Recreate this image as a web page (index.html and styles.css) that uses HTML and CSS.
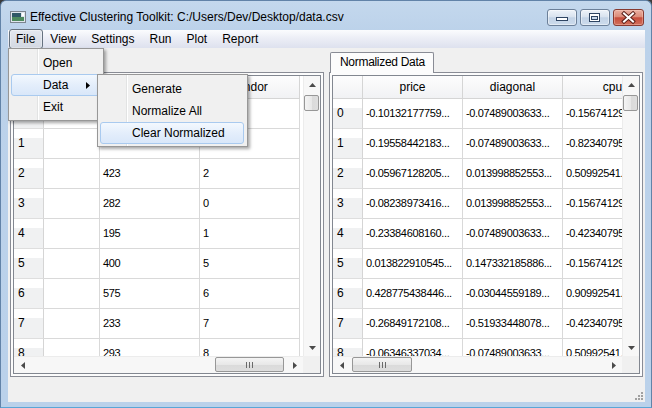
FILE: index.html
```html
<!DOCTYPE html>
<html lang="en">
<head>
<meta charset="utf-8">
<title>Effective Clustering Toolkit</title>
<link rel="stylesheet" href="styles.css">
</head>
<body>
<div class="window">
  <header class="titlebar">
    <svg class="app-icon" width="16" height="12" viewBox="0 0 16 12">
      <rect x="0.5" y="0.5" width="15" height="11" fill="#dfe6ec" stroke="#7b848e"/>
      <rect x="2" y="2" width="9" height="8" fill="#2f5866"/>
      <rect x="2" y="6" width="12" height="4" fill="#4d8a5e"/>
      <rect x="12" y="2" width="2" height="3" fill="#ffffff"/>
    </svg>
    <span class="title">Effective Clustering Toolkit: C:/Users/Dev/Desktop/data.csv</span>
    <div class="caption-buttons">
      <div class="cbtn">
        <svg viewBox="0 0 28 15" width="28" height="15"><rect x="8.5" y="7.5" width="11" height="3" fill="#fff" stroke="#2f4563"/></svg>
      </div>
      <div class="cbtn">
        <svg viewBox="0 0 28 15" width="28" height="15"><rect x="8.5" y="3.5" width="10" height="8" fill="#fff" stroke="#2f4563"/><rect x="10.5" y="6.5" width="6" height="3" fill="#c9d9ec" stroke="#2f4563"/></svg>
      </div>
      <div class="cbtn close">
        <svg viewBox="0 0 29 15" width="29" height="15"><path d="M10 3.5 L19 11.5 M19 3.5 L10 11.5" stroke="#5a2019" stroke-width="4" stroke-linecap="square"/><path d="M10 3.5 L19 11.5 M19 3.5 L10 11.5" stroke="#fff" stroke-width="2" stroke-linecap="square"/></svg>
      </div>
    </div>
  </header>

  <div class="client">
    <nav class="menubar">
      <span class="menu-title open">File</span>
      <span class="menu-title">View</span>
      <span class="menu-title">Settings</span>
      <span class="menu-title">Run</span>
      <span class="menu-title">Plot</span>
      <span class="menu-title">Report</span>
    </nav>

    <main class="content">
      <section class="tabwidget">
        <div class="tabbar"><div class="tab">Raw Data</div></div>
        <div class="pane">
          <div class="table left">
            <div class="view">
              <div class="hrow"><div class="hcell"></div><div class="hcell">cpu</div><div class="hcell">price</div><div class="hcell">vendor</div></div>
              <div class="row"><div class="rh">0</div><div class="cell"></div><div class="cell">355</div><div class="cell">3</div></div>
              <div class="row"><div class="rh">1</div><div class="cell"></div><div class="cell">293</div><div class="cell">1</div></div>
              <div class="row"><div class="rh">2</div><div class="cell"></div><div class="cell">423</div><div class="cell">2</div></div>
              <div class="row"><div class="rh">3</div><div class="cell"></div><div class="cell">282</div><div class="cell">0</div></div>
              <div class="row"><div class="rh">4</div><div class="cell"></div><div class="cell">195</div><div class="cell">1</div></div>
              <div class="row"><div class="rh">5</div><div class="cell"></div><div class="cell">400</div><div class="cell">5</div></div>
              <div class="row"><div class="rh">6</div><div class="cell"></div><div class="cell">575</div><div class="cell">6</div></div>
              <div class="row"><div class="rh">7</div><div class="cell"></div><div class="cell">233</div><div class="cell">7</div></div>
              <div class="row"><div class="rh">8</div><div class="cell"></div><div class="cell">293</div><div class="cell">8</div></div>
            </div>
            <div class="vscroll">
              <div class="sb-btn"><svg width="7" height="4" viewBox="0 0 7 4"><polygon points="0,4 7,4 3.5,0" fill="#4a4a4a"/></svg></div>
              <div class="vthumb"></div>
              <div class="sb-fill"></div>
              <div class="sb-btn"><svg width="7" height="4" viewBox="0 0 7 4"><polygon points="0,0 7,0 3.5,4" fill="#4a4a4a"/></svg></div>
            </div>
            <div class="hscroll">
              <div class="sb-btn"><svg width="4" height="7" viewBox="0 0 4 7"><polygon points="4,0 4,7 0,3.5" fill="#4a4a4a"/></svg></div>
              <div class="sb-fill"></div>
              <div class="hthumb far"><span class="grip"></span></div>
              <div class="sb-btn"><svg width="4" height="7" viewBox="0 0 4 7"><polygon points="0,0 0,7 4,3.5" fill="#4a4a4a"/></svg></div>
            </div>
            <div class="sb-corner"></div>
          </div>
        </div>
      </section>

      <section class="tabwidget">
        <div class="tabbar"><div class="tab">Normalized Data</div></div>
        <div class="pane">
          <div class="table right">
            <div class="view">
              <div class="hrow"><div class="hcell"></div><div class="hcell">price</div><div class="hcell">diagonal</div><div class="hcell">cpu</div></div>
              <div class="row"><div class="rh">0</div><div class="cell">-0.10132177759...</div><div class="cell">-0.07489003633...</div><div class="cell">-0.15674129...</div></div>
              <div class="row"><div class="rh">1</div><div class="cell">-0.19558442183...</div><div class="cell">-0.07489003633...</div><div class="cell">-0.82340795...</div></div>
              <div class="row"><div class="rh">2</div><div class="cell">-0.05967128205...</div><div class="cell">0.013998852553...</div><div class="cell">0.50992541...</div></div>
              <div class="row"><div class="rh">3</div><div class="cell">-0.08238973416...</div><div class="cell">0.013998852553...</div><div class="cell">-0.15674129...</div></div>
              <div class="row"><div class="rh">4</div><div class="cell">-0.23384608160...</div><div class="cell">-0.07489003633...</div><div class="cell">-0.42340795...</div></div>
              <div class="row"><div class="rh">5</div><div class="cell">0.013822910545...</div><div class="cell">0.147332185886...</div><div class="cell">-0.15674129...</div></div>
              <div class="row"><div class="rh">6</div><div class="cell">0.428775438446...</div><div class="cell">-0.03044559189...</div><div class="cell">0.90992541...</div></div>
              <div class="row"><div class="rh">7</div><div class="cell">-0.26849172108...</div><div class="cell">-0.51933448078...</div><div class="cell">-0.42340795...</div></div>
              <div class="row"><div class="rh">8</div><div class="cell">-0.06346337034...</div><div class="cell">-0.07489003633...</div><div class="cell">0.50992541...</div></div>
            </div>
            <div class="vscroll">
              <div class="sb-btn"><svg width="7" height="4" viewBox="0 0 7 4"><polygon points="0,4 7,4 3.5,0" fill="#4a4a4a"/></svg></div>
              <div class="vthumb"></div>
              <div class="sb-fill"></div>
              <div class="sb-btn"><svg width="7" height="4" viewBox="0 0 7 4"><polygon points="0,0 7,0 3.5,4" fill="#4a4a4a"/></svg></div>
            </div>
            <div class="hscroll">
              <div class="sb-btn"><svg width="4" height="7" viewBox="0 0 4 7"><polygon points="4,0 4,7 0,3.5" fill="#4a4a4a"/></svg></div>
              <div class="hthumb near"><span class="grip"></span></div>
              <div class="sb-fill"></div>
              <div class="sb-btn"><svg width="4" height="7" viewBox="0 0 4 7"><polygon points="0,0 0,7 4,3.5" fill="#4a4a4a"/></svg></div>
            </div>
            <div class="sb-corner"></div>
          </div>
        </div>
      </section>
    </main>

    <footer class="statusbar">
      <svg class="sizegrip" width="11" height="11" viewBox="0 0 11 11">
        <g fill="#a0a0a0">
          <rect x="8" y="2" width="2" height="2"/>
          <rect x="5" y="5" width="2" height="2"/><rect x="8" y="5" width="2" height="2"/>
          <rect x="2" y="8" width="2" height="2"/><rect x="5" y="8" width="2" height="2"/><rect x="8" y="8" width="2" height="2"/>
        </g>
      </svg>
    </footer>
  </div>
</div>

<div class="popup file-menu">
  <div class="mi">Open</div>
  <div class="mi hl">Data<svg class="submark" width="4" height="7" viewBox="0 0 4 7"><polygon points="0,0 0,7 4,3.5" fill="#000"/></svg></div>
  <div class="mi">Exit</div>
</div>
<div class="popup data-menu">
  <div class="mi">Generate</div>
  <div class="mi">Normalize All</div>
  <div class="mi hl">Clear Normalized</div>
</div>
</body>
</html>
```

FILE: styles.css
```css
* { box-sizing: border-box; }
html, body { margin: 0; padding: 0; }
body {
  position: relative;
  width: 652px;
  height: 408px;
  overflow: hidden;
  background: #3a3a3a;
  font-family: "Liberation Sans", Arial, sans-serif;
  font-size: 12px;
  color: #000;
}

.window {
  width: 652px;
  height: 408px;
  display: flex;
  flex-direction: column;
  border: 1px solid #6283a8;
  border-bottom-color: #5aa6d6;
  border-radius: 6px 6px 0 0;
  background: linear-gradient(#c4d8ed 0, #bcd2ea 30px, #bad1ea 100%);
  padding: 0 6px 5px 7px;
}

/* ---------- title bar ---------- */
.titlebar {
  flex: none;
  height: 29px;
  display: flex;
  align-items: center;
  padding: 3px 0 0 2px;
}
.app-icon { flex: none; margin-right: 4px; }
.title { flex: 1; white-space: nowrap; overflow: hidden; }
.caption-buttons {
  flex: none;
  align-self: flex-start;
  display: flex;
  gap: 3px;
  margin: 5px 1px 0 0;
}
.cbtn {
  width: 30px;
  height: 17px;
  border: 1px solid #6c8099;
  border-radius: 3px;
  background: linear-gradient(#eef3f9 0%, #d9e3ef 45%, #c3d3e6 52%, #ccdbec 100%);
  box-shadow: inset 0 0 0 1px rgba(255, 255, 255, 0.45);
}
.cbtn svg { display: block; }
.cbtn.close {
  width: 31px;
  border-color: #873a31;
  background: linear-gradient(#eab0a2 0%, #dc8c7a 45%, #c64d3c 52%, #d2705c 100%);
  box-shadow: inset 0 0 0 1px rgba(255, 220, 210, 0.35);
}

/* ---------- client ---------- */
.client {
  flex: 1;
  min-height: 0;
  display: flex;
  flex-direction: column;
  background: #f0f0f0;
}
.menubar {
  flex: none;
  height: 18px;
  display: flex;
  align-items: center;
  padding-left: 1px;
  background: linear-gradient(#fbfcfe 0, #eceef6 45%, #dde1ee 100%);
}
.menu-title {
  height: 20px;
  line-height: 18px;
  padding: 0 7px 0 6px;
  border: 1px solid transparent;
  border-radius: 3px;
  white-space: nowrap;
}
.menu-title.open {
  border-color: #66727f;
  background: linear-gradient(#e4e8ef, #d3d8e2);
  box-shadow: inset 0 0 0 1px rgba(255, 255, 255, 0.35);
}

.content {
  flex: 1;
  min-height: 0;
  display: flex;
  gap: 5px;
  padding: 4px 2px 0 2px;
}
.tabwidget {
  width: 314px;
  display: flex;
  flex-direction: column;
}
.tabbar {
  flex: none;
  height: 20px;
  display: flex;
  padding-left: 1px;
}
.tab {
  position: relative;
  z-index: 1;
  height: 21px;
  line-height: 19px;
  padding: 0 8px 0 9px;
  border: 1px solid #898c95;
  border-bottom: none;
  border-radius: 2px 2px 0 0;
  background: #fcfcfc;
  letter-spacing: -0.3px;
  white-space: nowrap;
}
.pane {
  flex: 1;
  min-height: 0;
  display: flex;
  border: 1px solid #898c95;
  background: #fcfcfc;
  padding: 2px;
}

/* ---------- tables ---------- */
.table {
  flex: 1;
  min-width: 0;
  min-height: 0;
  display: grid;
  grid-template-columns: minmax(0, 1fr) 17px;
  grid-template-rows: minmax(0, 1fr) 17px;
  border: 1px solid #828790;
  background: #fff;
}
.view { overflow: hidden; background: #fff; }
.hrow, .row { display: grid; width: max-content; }
.left .hrow, .left .row { grid-template-columns: 30px 56px 100px 100px; }
.right .hrow, .right .row { grid-template-columns: 30px 100px 100px 100px; }
.hrow { height: 23px; }
.row { height: 30px; }

.hcell {
  background: linear-gradient(#fdfdfd, #f1f2f4);
  border-right: 1px solid #d5d5d5;
  border-bottom: 1px solid #d5d5d5;
  text-align: center;
  line-height: 22px;
  white-space: nowrap;
  overflow: hidden;
}
.rh {
  background: linear-gradient(#ffffff 0, #ffffff 9px, #f0f1f2 9px, #f0f1f2 100%);
  border-right: 1px solid #d5d5d5;
  border-bottom: 1px solid #dedede;
  padding-left: 4px;
  line-height: 29px;
}
.cell {
  border-right: 1px solid #d9d9d9;
  border-bottom: 1px solid #d9d9d9;
  padding-left: 3px;
  line-height: 29px;
  font-size: 11px;
  letter-spacing: -0.35px;
  white-space: nowrap;
  overflow: hidden;
}

/* ---------- scrollbars ---------- */
.vscroll {
  display: flex;
  flex-direction: column;
  background: #f7f7f7;
  border-left: 1px solid #ececec;
}
.hscroll {
  display: flex;
  background: #f7f7f7;
  border-top: 1px solid #ececec;
}
.sb-btn {
  flex: none;
  width: 17px;
  height: 17px;
  display: flex;
  align-items: center;
  justify-content: center;
}
.vscroll .sb-btn { width: 16px; }
.hscroll .sb-btn { height: 16px; }
.sb-fill { flex: 1; }
.vthumb {
  flex: none;
  height: 16px;
  margin: 2px 1px 0 0;
  border: 1px solid #979797;
  border-radius: 2px;
  background: linear-gradient(to right, #f4f4f4, #e8e8e8 50%, #dadada 52%, #dedede);
}
.hthumb {
  flex: none;
  margin: 0 0 1px;
  display: flex;
  align-items: center;
  justify-content: center;
  border: 1px solid #979797;
  border-radius: 2px;
  background: linear-gradient(#f4f4f4, #e8e8e8 50%, #dadada 52%, #dedede);
}
.hthumb.far { width: 69px; margin-right: 2px; }
.hthumb.near { width: 60px; margin-left: 2px; }
.grip {
  width: 7px;
  height: 6px;
  background: repeating-linear-gradient(to right, #6a6a6a 0, #6a6a6a 1px, transparent 1px, transparent 3px);
}
.sb-corner { background: #f0f0f0; }

/* ---------- status bar ---------- */
.statusbar {
  flex: none;
  height: 25px;
  display: flex;
  justify-content: flex-end;
  align-items: flex-end;
}
.sizegrip { display: block; margin: 0 1px 1px 0; }

/* ---------- popup menus ---------- */
.popup {
  position: absolute;
  z-index: 10;
  border: 1px solid #979797;
  padding: 3px 0 2px;
  background: linear-gradient(to right, #f0f0f0 0, #f0f0f0 28px, #e2e3e3 28px, #e2e3e3 29px, #ffffff 29px, #ffffff 30px, #f0f0f0 30px);
  box-shadow: 2px 2px 3px rgba(0, 0, 0, 0.35);
}
.file-menu { left: 8px; top: 48px; width: 96px; }
.data-menu { left: 97px; top: 74px; width: 151px; }
.mi {
  height: 22px;
  margin: 0 3px 0 2px;
  padding-left: 31px;
  display: flex;
  align-items: center;
  border: 1px solid transparent;
  border-radius: 3px;
  white-space: nowrap;
}
.mi.hl {
  border-color: #a9caef;
  background: linear-gradient(#f3f8fe, #e4eefb 50%, #d9e7f9);
}
.submark { margin-left: auto; margin-right: 9px; }
```
